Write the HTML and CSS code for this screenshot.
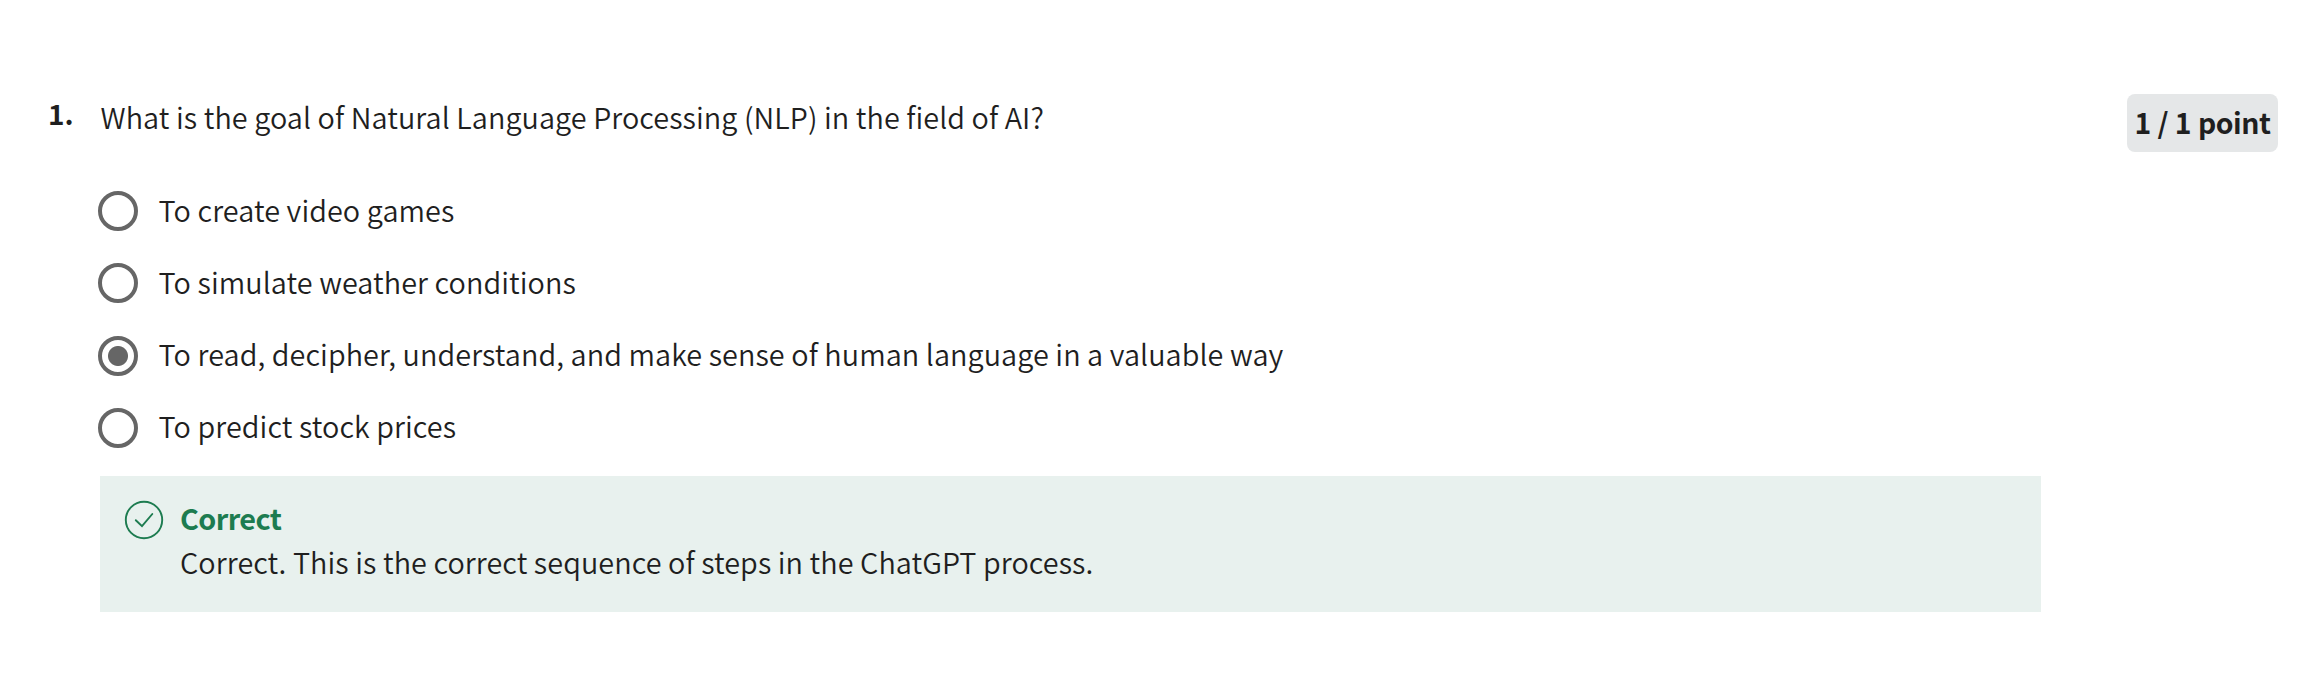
FILE: index.html
```html
<!DOCTYPE html>
<html lang="en">
<head>
<meta charset="utf-8">
<title>Quiz question</title>
<link rel="stylesheet" href="styles.css">
</head>
<body>
<main class="question">
  <div class="number">1.</div>
  <section class="content">
    <div class="prompt">What is the goal of Natural Language Processing (NLP) in the field of AI?</div>
    <div class="options">
      <div class="option"><span class="radio"></span><span class="label">To create video games</span></div>
      <div class="option"><span class="radio"></span><span class="label">To simulate weather conditions</span></div>
      <div class="option"><span class="radio checked"></span><span class="label">To read, decipher, understand, and make sense of human language in a valuable way</span></div>
      <div class="option"><span class="radio"></span><span class="label">To predict stock prices</span></div>
    </div>
    <div class="feedback">
      <svg class="check" viewBox="0 0 40 40" width="40" height="40" fill="none">
        <circle cx="20" cy="20" r="18.2"/>
        <path d="M11.8 20.2 18 26.2 28.3 14"/>
      </svg>
      <div class="feedback-body">
        <div class="status">Correct</div>
        <div class="message">Correct. This is the correct sequence of steps in the ChatGPT process.</div>
      </div>
    </div>
  </section>
  <div class="points">1 / 1 point</div>
</main>
</body>
</html>
```
FILE: styles.css
```css
* { box-sizing: border-box; }
body {
  margin: 0;
  background: #fff;
  color: #1f1f1f;
  font-family: "Noto Sans CJK SC", sans-serif;
  font-size: 28.8px;
  font-weight: 350;
  letter-spacing: 0.07px;
  line-height: 40px;
  white-space: nowrap;
}
.question { display: flex; align-items: flex-start; padding: 93px 42px 0 48px; }
.number { width: 52px; font-weight: 700; font-size: 28px; }
.content { width: 1941px; padding-top: 4px; }
.prompt { padding-left: 0.5px; }
.options { display: flex; flex-direction: column; gap: 32.33px; margin: 54px 0 0 -2px; }
.option { display: flex; align-items: center; gap: 20.5px; height: 40px; }
.radio { width: 40px; height: 40px; border: 4px solid #666; border-radius: 50%; }
.checked { background: radial-gradient(circle, #666 9.5px, transparent 10.5px); }
.label { margin-bottom: 3px; }
.feedback { display: flex; gap: 16px; height: 136px; margin-top: 28px; padding: 24px; background: #e8f1ee; }
.check { stroke: #1d7c50; stroke-width: 1.9; stroke-linecap: round; }
.feedback-body { margin-top: -1.5px; }
.status { color: #1d7c50; font-weight: 700; letter-spacing: -0.6px; }
.message { margin-top: 4px; }
.points { margin: 1px 0 0 auto; width: 151px; height: 58px; padding: 8px 0; text-align: center; font-weight: 700; font-size: 28.4px; letter-spacing: -0.45px; word-spacing: 0.8px; background: #e5e7e8; border-radius: 8px; }
```
